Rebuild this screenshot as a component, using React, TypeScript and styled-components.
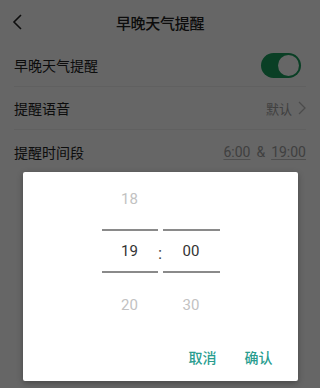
import React from "react";
import styled, { createGlobalStyle } from "styled-components";

const Global = createGlobalStyle`
  html, body { margin: 0; padding: 0; background: #fff; }
  body { font-family: "Noto Sans CJK SC", "Noto Sans", sans-serif; width: 320px; height: 388px; overflow: hidden; }
  * { box-sizing: border-box; }
`;

const Page = styled.div`
  position: relative;
  width: 320px;
  height: 388px;
  background: #fff;
  overflow: hidden;
`;

const Header = styled.div`
  height: 44px;
  display: flex;
  align-items: center;
  justify-content: center;
  position: relative;
`;

const Back = styled.div`
  position: absolute;
  left: 12px;
  top: 14px;
  width: 12px;
  height: 16px;
  display: flex;
`;

const Title = styled.div`
  font-size: 15px;
  font-weight: 500;
  color: #222;
  letter-spacing: -0.3px;
`;

const List = styled.div`
  padding: 0 14px;
`;

const Row = styled.div<{ $last?: boolean }>`
  height: 43px;
  display: flex;
  align-items: center;
  justify-content: space-between;
  border-bottom: ${(p) => (p.$last ? "none" : "1px solid #f0f0f0")};
`;

const Label = styled.div`
  font-size: 14px;
  color: #222;
`;

const Toggle = styled.div`
  width: 40px;
  height: 25px;
  border-radius: 13px;
  background: #1a9e5e;
  display: flex;
  align-items: center;
  justify-content: flex-end;
  padding: 2px;
  margin-right: 5px;
`;

const Knob = styled.div`
  width: 21px;
  height: 21px;
  border-radius: 50%;
  background: #fff;
`;

const Value = styled.div`
  display: flex;
  align-items: center;
  gap: 6px;
  font-size: 13px;
  color: #a0a0a0;
`;

const Times = styled.div`
  display: flex;
  align-items: center;
  gap: 6px;
  font-family: Roboto, "Noto Sans", sans-serif;
  font-size: 14px;
  color: #a0a0a0;
`;

const TimeLink = styled.span`
  text-decoration: underline;
  text-underline-offset: 2px;
  text-decoration-color: #c4c4c4;
`;

const Overlay = styled.div`
  position: absolute;
  inset: 0;
  background: rgba(0, 0, 0, 0.6);
  display: flex;
  justify-content: center;
  align-items: flex-end;
  padding-bottom: 7px;
`;

const Dialog = styled.div`
  width: 275px;
  height: 209px;
  background: #fff;
  border-radius: 2px;
  box-shadow: 0 2px 6px rgba(0, 0, 0, 0.3);
  display: flex;
  flex-direction: column;
`;

const Picker = styled.div`
  height: 159px;
  display: flex;
  justify-content: center;
  margin-left: 1px;
`;

const Column = styled.div<{ $w: number }>`
  width: ${(p) => p.$w}px;
  display: flex;
  flex-direction: column;
`;

const Cell = styled.div<{ $dim?: boolean }>`
  height: 53px;
  display: flex;
  align-items: center;
  justify-content: center;
  font-family: Roboto, "Noto Sans", sans-serif;
  font-size: 15px;
  color: ${(p) => (p.$dim ? "#c2c2c2" : "#333")};
`;

const SelCell = styled.div`
  height: 53px;
  padding: 4px 0 5px;
  display: flex;
`;

const SelBox = styled.div`
  flex: 1;
  border-top: 2px solid #8a8a8a;
  border-bottom: 2px solid #8a8a8a;
  display: flex;
  align-items: center;
  justify-content: center;
  font-family: Roboto, "Noto Sans", sans-serif;
  font-size: 15px;
  color: #333;
`;

const Sep = styled.div`
  width: 5px;
  display: flex;
  flex-direction: column;
  align-items: center;
  padding-top: 53px;
`;

const Colon = styled.div`
  height: 53px;
  display: flex;
  align-items: center;
  justify-content: center;
  font-family: Roboto, sans-serif;
  font-size: 17px;
  color: #444;
  padding-top: 3px;
`;

const Actions = styled.div`
  display: flex;
  justify-content: flex-end;
  margin-top: 8px;
  padding-right: 11px;
`;

const Btn = styled.div`
  height: 36px;
  padding: 0 14px;
  display: flex;
  align-items: center;
  font-size: 14px;
  font-weight: 500;
  color: #2a9d8f;
`;

const Chevron = () => (
  <svg width={8} height={14} viewBox="0 0 8 14" fill="none">
    <path d="M1 1 L7 7 L1 13" stroke="#bbb" strokeWidth="1.3" />
  </svg>
);

export default function App() {
  return (
    <>
      <Global />
      <Page>
        <Header>
          <Back>
            <svg width="12" height="16" viewBox="0 0 12 16" fill="none">
              <path d="M9 1 L2 8 L9 15" stroke="#222" strokeWidth="1.6" />
            </svg>
          </Back>
          <Title>早晚天气提醒</Title>
        </Header>
        <List>
          <Row>
            <Label>早晚天气提醒</Label>
            <Toggle>
              <Knob />
            </Toggle>
          </Row>
          <Row>
            <Label>提醒语音</Label>
            <Value>
              默认
              <Chevron />
            </Value>
          </Row>
          <Row $last>
            <Label>提醒时间段</Label>
            <Times>
              <TimeLink>6:00</TimeLink>&amp;<TimeLink>19:00</TimeLink>
            </Times>
          </Row>
        </List>
        <Overlay>
          <Dialog>
            <Picker>
              <Column $w={56}>
                <Cell $dim>18</Cell>
                <SelCell>
                  <SelBox>19</SelBox>
                </SelCell>
                <Cell $dim>20</Cell>
              </Column>
              <Sep>
                <Colon>:</Colon>
              </Sep>
              <Column $w={57}>
                <Cell $dim />
                <SelCell>
                  <SelBox>00</SelBox>
                </SelCell>
                <Cell $dim>30</Cell>
              </Column>
            </Picker>
            <Actions>
              <Btn>取消</Btn>
              <Btn>确认</Btn>
            </Actions>
          </Dialog>
        </Overlay>
      </Page>
    </>
  );
}
